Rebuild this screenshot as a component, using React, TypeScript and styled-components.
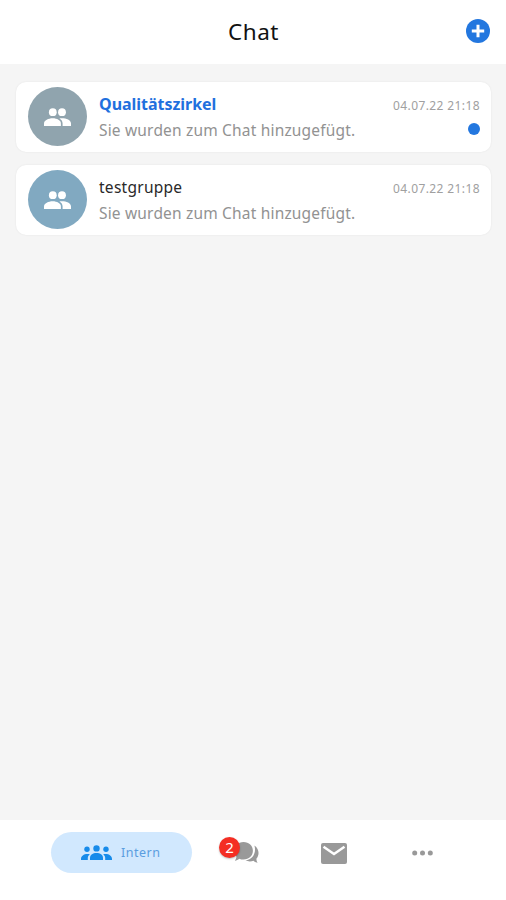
import React from "react";
import styled, { createGlobalStyle } from "styled-components";

const GlobalStyle = createGlobalStyle`
  * { box-sizing: border-box; }
  body { margin: 0; background: #f5f5f5; font-family: "Noto Sans", "Open Sans", sans-serif; }
  svg { display: block; }
  button { border: 0; padding: 0; background: none; font: inherit; }
`;

const Screen = styled.div`
  height: 100vh;
  display: flex;
  flex-direction: column;
  background: #f5f5f5;
`;

const Header = styled.header`
  height: 64px;
  flex: none;
  display: grid;
  grid-template-columns: 40px 1fr 40px;
  align-items: center;
  background: #fff;
`;

const Title = styled.h1`
  grid-column: 2;
  margin: 0;
  padding-left: 1px;
  text-align: center;
  font-size: 22.5px;
  line-height: 30px;
  font-weight: 400;
  letter-spacing: 0.5px;
  color: #111;
`;

const AddButton = styled.button`
  width: 24px;
  height: 24px;
  margin-bottom: 3px;
`;

const ChatList = styled.main`
  flex: 1;
  display: flex;
  flex-direction: column;
  gap: 13px;
  padding: 18px 15px 0 16px;
`;

const Card = styled.article`
  height: 70px;
  display: flex;
  align-items: center;
  padding: 0 11px 1px 12px;
  border-radius: 10px;
  background: #fff;
  box-shadow: 0 0 2px rgba(0, 0, 0, 0.08);
`;

const Avatar = styled.div<{ $color: string }>`
  width: 59px;
  height: 59px;
  flex: none;
  display: flex;
  align-items: center;
  justify-content: center;
  border-radius: 50%;
  background: ${(p) => p.$color};
`;

const Summary = styled.div`
  flex: 1;
  margin-left: 12px;
  white-space: nowrap;
`;

const Name = styled.div<{ $unread: boolean }>`
  font-size: ${(p) => (p.$unread ? "16px" : "15.5px")};
  line-height: 26px;
  font-weight: ${(p) => (p.$unread ? 700 : 400)};
  letter-spacing: ${(p) => (p.$unread ? "-0.03px" : "0.27px")};
  color: ${(p) => (p.$unread ? "#1f70de" : "#292929")};
`;

const Message = styled.div`
  font-size: 15.5px;
  line-height: 26px;
  letter-spacing: 0.18px;
  color: #929292;
`;

const Meta = styled.div`
  height: 52px;
  display: flex;
  flex-direction: column;
  align-items: flex-end;
`;

const Time = styled.time`
  font-size: 12px;
  line-height: 29px;
  letter-spacing: 0.4px;
  color: #a0a0a0;
`;

const UnreadDot = styled.span`
  width: 12px;
  height: 12px;
  margin-top: 3px;
  border-radius: 50%;
  background: #2377df;
`;

const TabBar = styled.nav`
  height: 80px;
  flex: none;
  display: flex;
  align-items: flex-start;
  padding: 12px 0 0 51px;
  background: #fff;
`;

const ActiveTab = styled.button`
  width: 141px;
  height: 41px;
  display: flex;
  align-items: center;
  padding-left: 30px;
  gap: 9px;
  border-radius: 21px;
  background: #d1e8fe;
  color: #5a9de0;
  font-size: 12.5px;
  letter-spacing: 0.5px;
`;

const Tab = styled.button`
  position: relative;
  width: 88px;
  height: 42px;
  display: flex;
  align-items: center;
  justify-content: center;
  color: #999;

  &:nth-of-type(2) { margin-left: 10px; }
`;

const Badge = styled.span`
  position: absolute;
  left: 17px;
  top: 5px;
  width: 21px;
  height: 21px;
  border-radius: 50%;
  background: #f42e24;
  color: #fff;
  font-size: 15px;
  line-height: 20px;
  text-align: center;
  box-shadow: 0 1px 2px rgba(0, 0, 0, 0.25);
`;

const PairIcon = () => (
  <svg width="27" height="18" viewBox="0 0 27 18" fill="#fff">
    <circle cx="8.8" cy="4.2" r="3.9" />
    <circle cx="18" cy="4.2" r="3.9" />
    <path d="M0 18v-2.6C0 12.4 4.4 10.3 8.7 10.3s8.2 2.1 8.2 5.1V18Z" />
    <path d="M15.4 10.6c4.8-.9 11.6.9 11.6 4.8V18h-8.4v-2.6c0-2-1.2-3.6-3.2-4.8Z" />
  </svg>
);

const PlusIcon = () => (
  <svg width="24" height="24" viewBox="0 0 24 24">
    <circle cx="12" cy="12" r="12" fill="#2377df" />
    <path d="M12 5.8v12.4M5.8 12h12.4" stroke="#fff" strokeWidth="3" />
  </svg>
);

const TeamIcon = () => (
  <svg width="31" height="15" viewBox="0 0 31 15" fill="#178bea">
    <circle cx="15.5" cy="3.4" r="3.2" />
    <circle cx="6" cy="4.2" r="2.7" />
    <circle cx="25" cy="4.2" r="2.7" />
    <path d="M9 15v-2c0-3.3 2.9-5 6.5-5s6.5 1.7 6.5 5v2Z" />
    <path d="M0 15v-1c0-3.4 3.6-5.7 8.8-4.8-1.3 1.2-2 2.3-2 3.9V15Z" />
    <path d="M31 15v-1c0-3.4-3.6-5.7-8.8-4.8 1.3 1.2 2 2.3 2 3.9V15Z" />
  </svg>
);

const BubblesIcon = () => (
  <svg width="25" height="22" viewBox="0 0 25 22" fill="currentColor">
    <path d="M9.5 0c5.5 0 9.4 3.9 9.4 8.8s-3.9 8.8-9.4 8.8c-1.7 0-3-.3-4.2-.9-1.3 1-2.8 1.8-4.5 2 1-1.2 1.5-2.5 1.7-4C1 13 .1 11 .1 8.8.1 3.9 4 0 9.5 0Z" />
    <path d="M20.4 3.4c5 3.4 5.2 9.6 2 13.3.1 1.8.4 2.9 1.3 4.1-1.7-.2-3.1-1-4.2-2-2.7 1-5.8.8-8-.5 6.8-.5 11.2-7 8.9-14.9Z" />
  </svg>
);

const MailIcon = () => (
  <svg width="26" height="21" viewBox="0 0 26 21">
    <rect width="26" height="21" rx="2" fill="currentColor" />
    <path d="M2.5 3.8 13 11l10.5-7.2" fill="none" stroke="#fff" strokeWidth="2.5" />
  </svg>
);

const MoreIcon = () => (
  <svg width="21" height="6" viewBox="0 0 21 6" fill="currentColor">
    <circle cx="2.7" cy="3" r="2.5" />
    <circle cx="10.5" cy="3" r="2.5" />
    <circle cx="18.3" cy="3" r="2.5" />
  </svg>
);

const chats = [
  { name: "Qualitätszirkel", color: "#90a4ae", unread: true },
  { name: "testgruppe", color: "#81a9c1", unread: false },
];

export default function App() {
  return (
    <Screen>
      <GlobalStyle />
      <Header>
        <Title>Chat</Title>
        <AddButton aria-label="Neuer Chat"><PlusIcon /></AddButton>
      </Header>
      <ChatList>
        {chats.map((chat) => (
          <Card key={chat.name}>
            <Avatar $color={chat.color}><PairIcon /></Avatar>
            <Summary>
              <Name $unread={chat.unread}>{chat.name}</Name>
              <Message>Sie wurden zum Chat hinzugefügt.</Message>
            </Summary>
            <Meta>
              <Time>04.07.22 21:18</Time>
              {chat.unread && <UnreadDot />}
            </Meta>
          </Card>
        ))}
      </ChatList>
      <TabBar>
        <ActiveTab><TeamIcon />Intern</ActiveTab>
        <Tab aria-label="Chats"><BubblesIcon /><Badge>2</Badge></Tab>
        <Tab aria-label="Nachrichten"><MailIcon /></Tab>
        <Tab aria-label="Mehr"><MoreIcon /></Tab>
      </TabBar>
    </Screen>
  );
}
